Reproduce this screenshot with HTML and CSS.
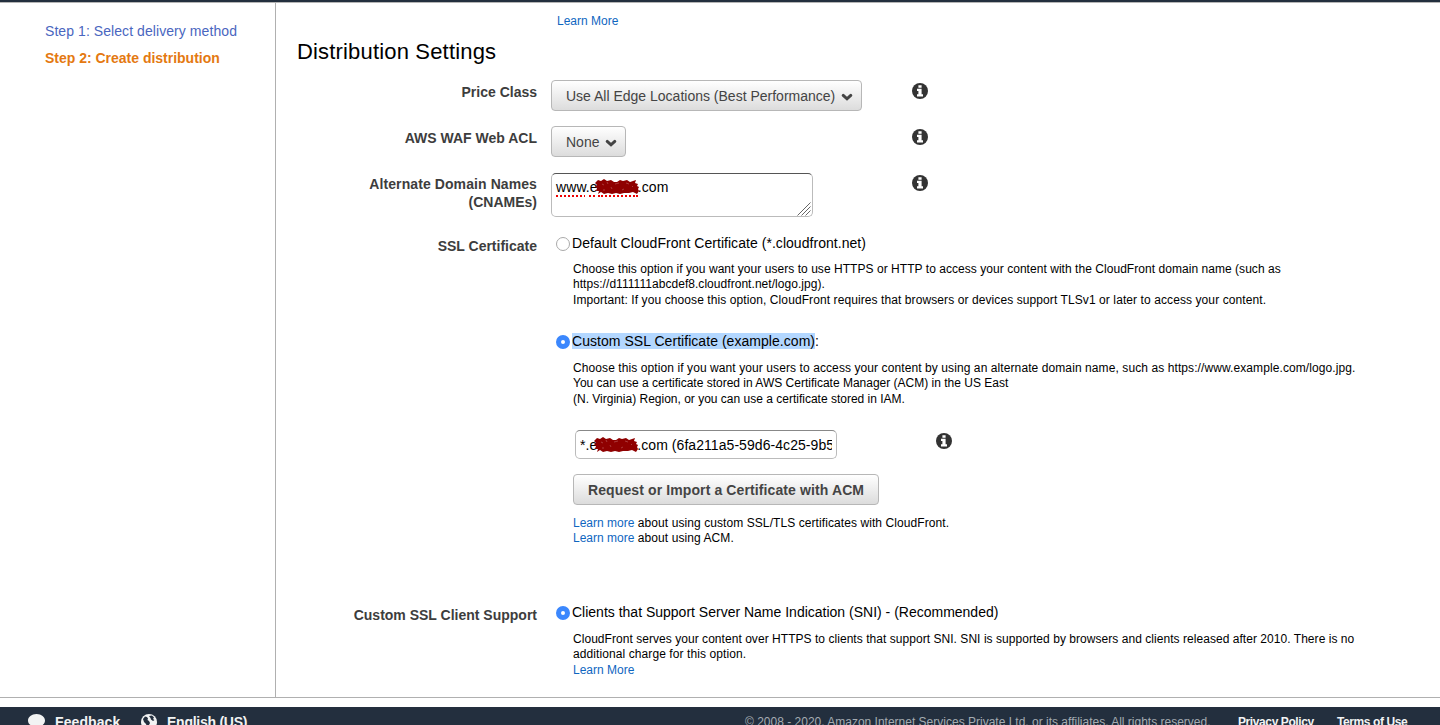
FILE: index.html
```html
<!DOCTYPE html>
<html lang="en">
<head>
<meta charset="utf-8">
<title>Create distribution</title>
<link rel="stylesheet" href="styles.css">
</head>
<body>
<svg class="defs" width="0" height="0" aria-hidden="true">
  <symbol id="info" viewBox="0 0 16 16"><circle cx="8" cy="8" r="8" fill="#333"/><path fill="#fff" d="M6.400 2.200h3.200v2.500h-3.200zM5 5.800h4.600v5.500h1.400v2.100H5v-2.100h1.400V7.900H5z"/></symbol>
  <symbol id="chevron" viewBox="0 0 12 8"><path d="M2.200 2.400 6 5.800 9.800 2.400" fill="none" stroke="#444" stroke-width="3" stroke-linecap="round"/></symbol>
  <symbol id="scribble" viewBox="0 0 44 16"><path fill="#8f0000" d="M0 4 3 1 6 2 9 0 12 2 16 1 19 3 22 3 25 1 28 2 32 1 35 3 41 1 40 4 43 5 42 7 44 8 43 10 44 12 42 15 38 13 34 14 29 14 25 15 21 14 17 15 13 14 9 15 6 13 3 15 4 12 1 12 2 9 0 8 2 6z"/><path fill="none" stroke="#b75555" stroke-width=".7" d="M7 5l2 1M12 3l1 2M20 5l4-1M31 4l3 1M8 11l2 0M27 11l2-1M16 8l1 2M37 8l1-1"/></symbol>
</svg>
<div class="topbar"></div>
<div class="page">
  <nav class="steps">
    <a class="step">Step 1: Select delivery method</a>
    <a class="step current">Step 2: Create distribution</a>
  </nav>
  <main class="main">
    <div class="top-link"><a class="link">Learn More</a></div>
    <h1 class="heading">Distribution Settings</h1>
    <section class="row row-price">
      <div class="label">Price Class</div>
      <div class="control"><button class="button select wide"><span>Use All Edge Locations (Best Performance)</span><svg class="chevron"><use href="#chevron"/></svg></button></div>
      <svg class="info"><use href="#info"/></svg>
    </section>
    <section class="row row-acl">
      <div class="label">AWS WAF Web ACL</div>
      <div class="control"><button class="button select narrow"><span>None</span><svg class="chevron"><use href="#chevron"/></svg></button></div>
      <svg class="info"><use href="#info"/></svg>
    </section>
    <section class="row row-names">
      <div class="label"><span class="roomy">Alternate Domain Names</span><br>(CNAMEs)</div>
      <div class="control"><div class="textarea"><span class="misspelt">www</span>.<span class="misspelt">e</span><span class="redacted dotted"><svg class="scribble"><use href="#scribble"/></svg></span>.com
        <svg class="grip" viewBox="0 0 14 14"><path d="M.5 13.500l13-13M4.500 13.500l9-9M8.500 13.500l5-5" fill="none" stroke="#666"/></svg></div></div>
      <svg class="info"><use href="#info"/></svg>
    </section>
    <section class="row row-cert">
      <div class="label">SSL Certificate</div>
      <div class="options">
        <div class="option"><i class="radio"></i><span class="option-text">Default CloudFront Certificate (*.cloudfront.net)</span></div>
        <p class="hint"><span class="ease">Choose this option if you want your users to use HTTPS or HTTP to access your content with the CloudFront domain name (such as</span><br><span class="ease">https://d111111abcdef8.cloudfront.net/logo.jpg).</span><br><span class="roomy">Important: If you choose this option, CloudFront requires that browsers or devices support TLSv1 or later to access your content.</span></p>
        <div class="option second"><i class="radio on"></i><span class="option-text"><mark class="selected">Custom SSL Certificate (example.com)</mark>:</span></div>
        <p class="hint custom-hint"><span class="roomy">Choose this option if you want your users to access your content by using an alternate domain name, such as https://www.example.com/logo.jpg.</span><br>You can use a certificate stored in AWS Certificate Manager (ACM) in the US East<br>(N. Virginia) Region, or you can use a certificate stored in IAM.</p>
        <div class="cert-line">
          <div class="input"><div class="input-text">*.e<span class="redacted"><svg class="scribble"><use href="#scribble"/></svg></span>.com (6fa211a5-59d6-4c25-9b5</div></div>
          <svg class="info cert-info"><use href="#info"/></svg>
        </div>
        <button class="button import"><span>Request or Import a Certificate with ACM</span></button>
        <p class="hint links ease"><a class="link">Learn more</a> about using custom SSL/TLS certificates with CloudFront.<br><a class="link">Learn more</a> about using ACM.</p>
      </div>
    </section>
    <section class="row row-client">
      <div class="label">Custom SSL Client Support</div>
      <div class="options">
        <div class="option"><i class="radio on"></i><span>Clients that Support Server Name Indication (SNI) - (Recommended)</span></div>
        <p class="hint client-hint"><span class="ease">CloudFront serves your content over HTTPS to clients that support SNI. SNI is supported by browsers and clients released after 2010. There is no</span><br><span class="roomy">additional charge for this option.</span><br><a class="link">Learn More</a></p>
      </div>
    </section>
  </main>
</div>
<footer class="footer">
  <svg class="bubble" viewBox="0 0 17 16"><path fill="#f2f3f3" d="M8.500 0c5 0 8.500 3 8.500 6.500S13.500 13 8.500 13l-5 2 1-3C2 11 0 9.500 0 6.500 0 3 3.500 0 8.500 0z"/></svg>
  <span class="foot-bold feedback">Feedback</span>
  <svg class="globe" viewBox="0 0 16 16"><circle cx="8" cy="8" r="8" fill="#f2f3f3"/><path fill="#232f3e" d="M2 5 4 2.500 6 3l1 1.500L6.500 6 8 7l1 2-1 2-1.500 3L5 10 3 8zM8 2l3-.5 2 2-1 1.500 1.500 1L12 7l-2-1.500L9.500 4z"/></svg>
  <span class="foot-bold language">English (US)</span>
  <span class="copyright">© 2008 - 2020, Amazon Internet Services Private Ltd. or its affiliates. All rights reserved.</span>
  <span class="foot-small privacy">Privacy Policy</span>
  <span class="foot-small">Terms of Use</span>
</footer>
</body>
</html>
```
FILE: styles.css
```css
* { box-sizing: border-box; }
body { margin: 0; height: 725px; overflow: hidden; background: #fff; color: #000; font: 14px/18px "Liberation Sans", Arial, sans-serif; }
.defs { display: none; }
.topbar { height: 3px; background: #232f3e; border-bottom: 1px solid #b5b5b5; }
.page { display: flex; height: 695px; border-bottom: 1px solid #b0b0b0; }
.steps { display: flex; flex-direction: column; gap: 9px; width: 276px; padding: 19px 0 0 45px; border-right: 1px solid #b0b0b0; }
.step { color: #4a66c0; white-space: nowrap; letter-spacing: .07px; }
.current { color: #e47911; font-weight: bold; letter-spacing: -.01px; }
.main { flex: 1; padding: 11px 0 0 21px; white-space: nowrap; }
.top-link { height: 16px; padding-left: 260px; font-size: 12px; line-height: 15.4px; }
.link { color: #0f66bf; letter-spacing: 0; }
.heading { height: 28px; margin: 7px 0 15px; font-size: 22px; line-height: 29px; font-weight: normal; letter-spacing: .17px; }
.row { display: flex; }
.row-price, .row-acl { height: 46px; }
.row-names { height: 62px; }
.row-cert { height: 369px; }
.label { width: 240px; padding-top: 3px; text-align: right; font-weight: bold; color: #3d3d3d; }
.row-cert .label, .row-client .label { padding-top: 3px; }
.control { width: 361px; margin-left: 14px; }
.info { width: 16px; height: 16px; margin-top: 3px; }
.button { display: flex; align-items: center; height: 31px; padding: 1px 14px 0; border: 1px solid #b7b7b7; border-radius: 4px; background: linear-gradient(#fff, #dcdcdc); color: #444; font: 14px/18px "Liberation Sans", Arial, sans-serif; white-space: nowrap; }
.select { justify-content: space-between; padding-right: 8px; }
.wide { width: 311px; }
.narrow { width: 75px; }
.chevron { width: 12px; height: 8px; margin-top: 1px; }
.row-names .control { margin-top: 1px; }
.textarea { position: relative; width: 262px; height: 44px; padding: 4px; border: 1px solid #bbb; border-top-color: #555; border-radius: 5px; letter-spacing: .1px; }
.grip { position: absolute; right: 1px; bottom: 0; width: 14px; height: 14px; }
.misspelt { text-decoration: underline dotted #e00 2px; text-underline-offset: 3px; }
.redacted { display: inline-block; position: relative; width: 40px; height: 10px; }
.dotted::after { content: ""; position: absolute; left: 0; right: 0; bottom: -5px; border-bottom: 2px dotted #e00; }
.scribble { position: absolute; left: -3px; top: -3px; width: 44px; height: 16px; }
.options { margin-left: 19px; }
.option { display: flex; height: 18px; }
.option-text { letter-spacing: .045px; }
.radio { width: 14px; height: 14px; margin: 3px 2px 0 0; border: 1px solid #aaa; border-radius: 50%; background: #fff; }
.on { border: 5px solid #3b87fd; }
.selected { background: #b3d7ff; color: inherit; }
.hint { height: 47px; margin: 10px 0 0 17px; font-size: 12px; line-height: 15.4px; }
.ease { letter-spacing: .045px; }
.roomy { letter-spacing: .09px; }
.second { margin-top: 23px; }
.custom-hint { margin-top: 11px; }
.cert-line { display: flex; margin: 22px 0 0 19px; }
.input { width: 262px; height: 29px; padding: 5px 4px 0; border: 1px solid #bbb; border-top-color: #888; border-radius: 5px; }
.input-text { overflow: hidden; letter-spacing: .06px; }
.cert-info { margin-left: 99px; }
.import { width: 306px; margin: 15px 0 0 17px; font-weight: bold; letter-spacing: .11px; }
.links { margin-top: 11px; letter-spacing: .08px; }
.client-hint { margin-top: 11px; }
.footer { display: flex; align-items: flex-start; height: 18px; margin-top: 9px; padding: 7px 0 0 28px; overflow: hidden; background: #232f3e; white-space: nowrap; color: #f2f3f3; }
.bubble { flex: none; width: 17px; height: 16px; margin-right: 10px; }
.globe { flex: none; width: 16px; height: 16px; margin-right: 10px; }
.foot-bold { flex: none; line-height: 16px; font-weight: bold; }
.feedback { width: 86px; letter-spacing: .1px; }
.language { width: 578px; letter-spacing: -.25px; }
.copyright { flex: none; width: 493px; color: #a5acb2; font-size: 12px; line-height: 16px; }
.foot-small { flex: none; font-size: 12px; line-height: 16px; font-weight: bold; letter-spacing: -.4px; }
.privacy { width: 99px; }
```
